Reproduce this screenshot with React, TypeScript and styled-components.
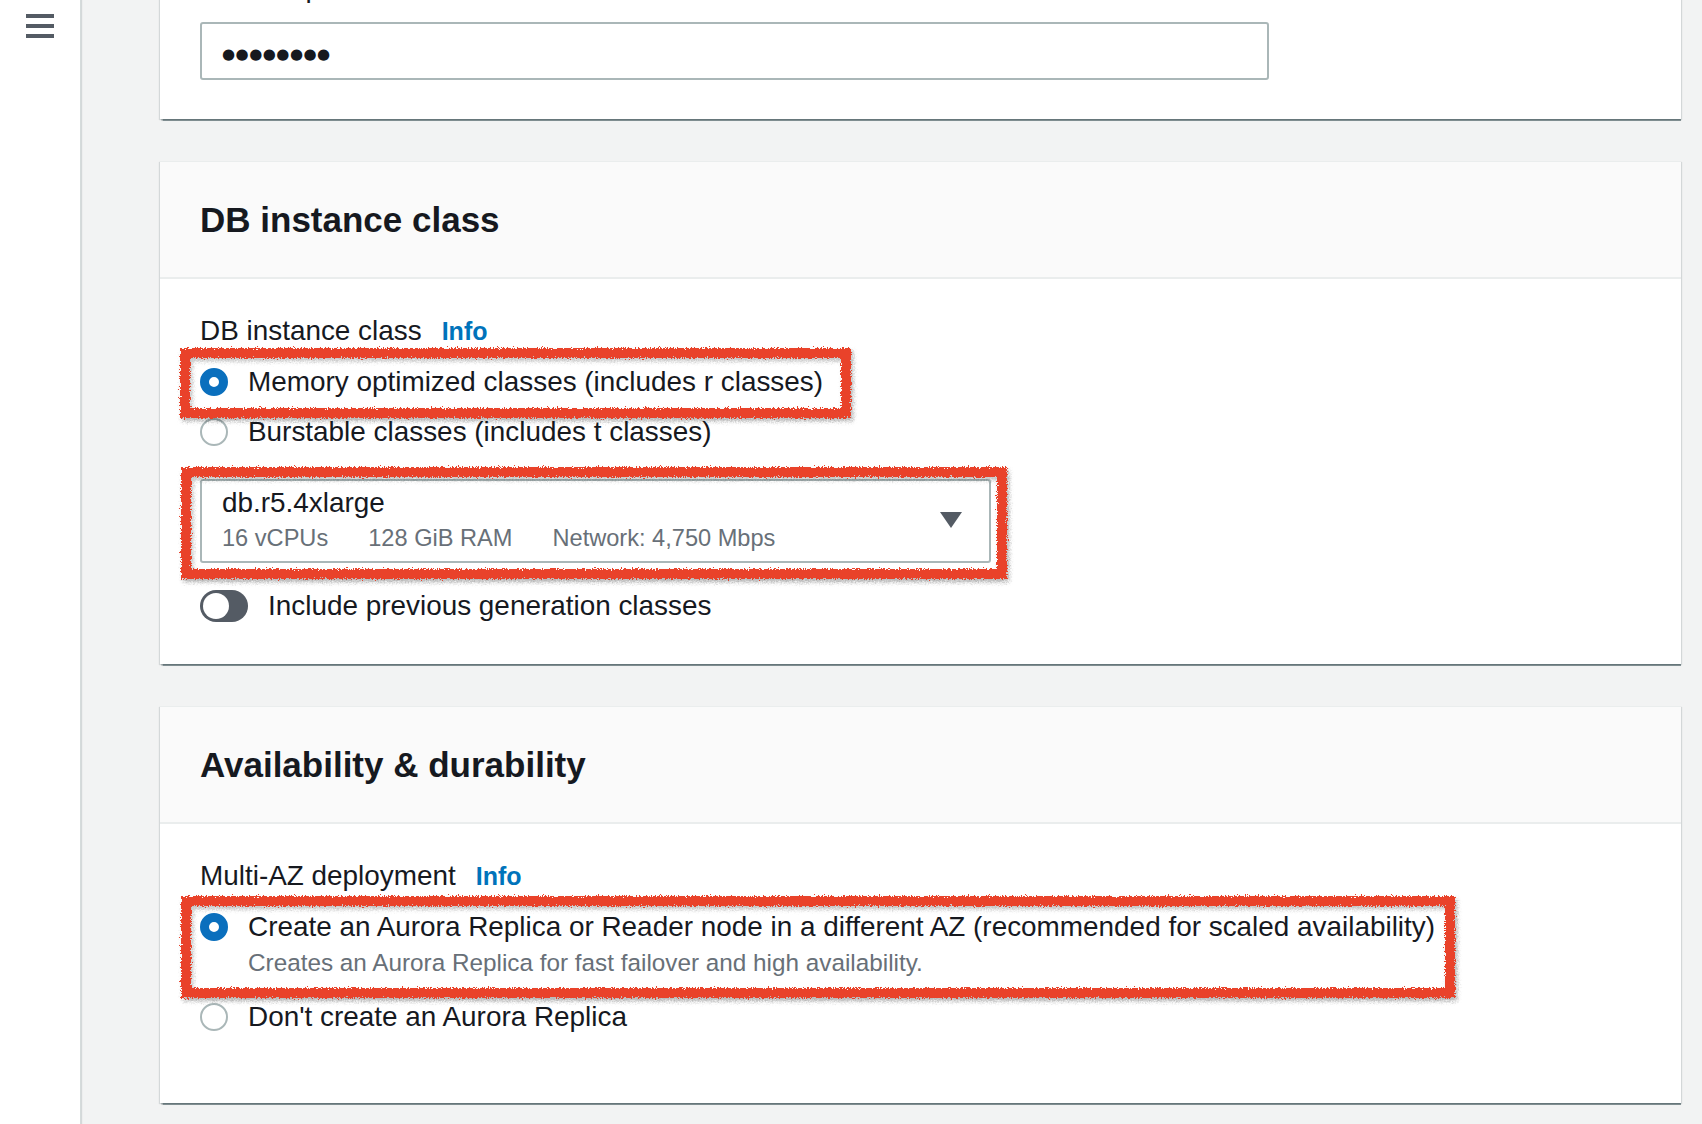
import React from "react";
import styled, { createGlobalStyle } from "styled-components";

const Global = createGlobalStyle`
  html, body { margin: 0; padding: 0; }
  body {
    background: #f2f3f3;
    font-family: "Liberation Sans", Arial, sans-serif;
    color: #16191f;
    overflow: hidden;
  }
  * { box-sizing: border-box; }
`;

const Page = styled.div`
  display: flex;
  min-height: 1124px;
  background: #f2f3f3;
`;

const Sidebar = styled.aside`
  width: 81px;
  flex: 0 0 81px;
  background: #ffffff;
  border-right: 1px solid #d5dbdb;
  box-shadow: 1px 0 1px rgba(0, 28, 36, 0.12);
  padding: 14px 0 0 26px;
`;

const Main = styled.main`
  flex: 1;
  display: flex;
  flex-direction: column;
  gap: 42px;
  padding: 0 21px 0 79px;
`;

const Card = styled.section<{ $pull?: number }>`
  background: #ffffff;
  margin-top: ${(p) => (p.$pull ? `-${p.$pull}px` : "0")};
  box-shadow: 0 2px 1px -0.5px rgba(0, 28, 36, 0.45),
    1px 1px 1px 0 rgba(0, 28, 36, 0.12), -1px 1px 1px 0 rgba(0, 28, 36, 0.12);
  border-top: 1px solid #eaeded;
`;

const CardHeader = styled.header`
  height: 117px;
  display: flex;
  align-items: center;
  padding: 0 40px;
  background: #fafafa;
  border-bottom: 2px solid #eaeded;
`;

const Heading = styled.h2`
  margin: 0;
  font-size: 35px;
  font-weight: 700;
  color: #16191f;
`;

const CardBody = styled.div<{ $bottom: number }>`
  display: flex;
  flex-direction: column;
  align-items: flex-start;
  padding: 34px 40px ${(p) => p.$bottom}px;
`;

const FieldLabel = styled.div`
  display: flex;
  align-items: baseline;
  gap: 20px;
  font-size: 27.9px;
  line-height: 36px;
  color: #16191f;
`;

const Info = styled.span`
  font-size: 25px;
  font-weight: 700;
  color: #0073bb;
`;

const PasswordBox = styled.div`
  margin-top: 16px;
  width: 1069px;
  height: 58px;
  border: 2px solid #aab7b8;
  border-radius: 3px;
  display: flex;
  align-items: center;
  padding: 6px 20px 0;
`;

const Dots = styled.span`
  font-family: "DejaVu Sans", sans-serif;
  font-size: 15px;
  letter-spacing: 0.5px;
  color: #16191f;
`;

const RadioGroup = styled.div`
  margin-top: 8px;
  display: flex;
  flex-direction: column;
  align-items: flex-start;
`;

const RadioRow = styled.div`
  display: flex;
  align-items: flex-start;
  gap: 20px;
  padding: 7px 0;
`;

const RadioCircle = styled.span<{ $checked?: boolean }>`
  flex: 0 0 28px;
  width: 28px;
  height: 28px;
  margin-top: 4px;
  border-radius: 50%;
  background: #ffffff;
  border: ${(p) => (p.$checked ? "9px solid #0a6fbd" : "2px solid #aab7b8")};
`;

const RadioText = styled.div`
  display: flex;
  flex-direction: column;
`;

const RadioLabel = styled.span`
  font-size: 27.9px;
  line-height: 36px;
  color: #16191f;
  white-space: nowrap;
`;

const RadioDesc = styled.span`
  font-size: 24.3px;
  line-height: 36px;
  padding-bottom: 4px;
  color: #687078;
  white-space: nowrap;
`;

const Annotated = styled.div<{ $inset: string; $gap?: number }>`
  position: relative;
  margin-top: ${(p) => p.$gap ?? 0}px;
  &::after {
    content: "";
    position: absolute;
    inset: ${(p) => p.$inset};
    border: 10px solid #e9432b;
    box-shadow: 2px 3px 4px rgba(0, 0, 0, 0.3),
      inset 2px 3px 4px rgba(0, 0, 0, 0.25);
    filter: url(#rough);
    pointer-events: none;
  }
`;

const Select = styled.div`
  width: 791px;
  height: 84px;
  border: 2px solid #aab7b8;
  border-radius: 3px;
  padding: 4px 27px 6px 20px;
  display: flex;
  align-items: center;
  justify-content: space-between;
`;

const SelectContent = styled.div`
  display: flex;
  flex-direction: column;
`;

const SelectValue = styled.span`
  font-size: 27.9px;
  line-height: 36px;
  color: #16191f;
`;

const SelectMeta = styled.div`
  display: flex;
  gap: 40px;
  font-size: 23.6px;
  line-height: 34px;
  color: #687078;
`;

const ToggleRow = styled.div`
  margin-top: 25px;
  display: flex;
  align-items: center;
  gap: 20px;
  height: 36px;
`;

const ToggleTrack = styled.span`
  width: 48px;
  height: 32px;
  border-radius: 16px;
  background: #545b64;
  display: flex;
  align-items: center;
  padding-left: 3px;
`;

const ToggleKnob = styled.span`
  width: 26px;
  height: 26px;
  border-radius: 50%;
  background: #ffffff;
`;

const ToggleLabel = styled.span`
  font-size: 27.9px;
  line-height: 36px;
  color: #16191f;
`;

const Defs = styled.svg`
  position: absolute;
  width: 0;
  height: 0;
`;

const Hamburger = () => (
  <svg width="28" height="24" viewBox="0 0 28 24" fill="#545b64">
    <rect x="0" y="0" width="28" height="4" />
    <rect x="0" y="10" width="28" height="4" />
    <rect x="0" y="20" width="28" height="4" />
  </svg>
);

const Caret = () => (
  <svg width="22" height="16" viewBox="0 0 22 16">
    <path d="M0 0 H22 L11 16 Z" fill="#545b64" />
  </svg>
);

export default function App() {
  return (
    <>
      <Global />
      <Defs aria-hidden="true">
        <filter id="rough" x="-10%" y="-10%" width="120%" height="120%">
          <feTurbulence type="fractalNoise" baseFrequency="0.7" numOctaves="2" seed="3" result="noise" />
          <feDisplacementMap in="SourceGraphic" in2="noise" scale="6" xChannelSelector="R" yChannelSelector="G" />
        </filter>
      </Defs>
      <Page>
        <Sidebar>
          <Hamburger />
        </Sidebar>
        <Main>
          <Card $pull={65}>
            <CardBody $bottom={39}>
              <FieldLabel>Confirm password</FieldLabel>
              <PasswordBox>
                <Dots>●●●●●●●●</Dots>
              </PasswordBox>
            </CardBody>
          </Card>

          <Card>
            <CardHeader>
              <Heading>DB instance class</Heading>
            </CardHeader>
            <CardBody $bottom={40}>
              <FieldLabel>
                DB instance class <Info>Info</Info>
              </FieldLabel>
              <RadioGroup>
                <Annotated $inset="-9px -28px -11px -20px">
                  <RadioRow>
                    <RadioCircle $checked />
                    <RadioText>
                      <RadioLabel>Memory optimized classes (includes r classes)</RadioLabel>
                    </RadioText>
                  </RadioRow>
                </Annotated>
                <RadioRow>
                  <RadioCircle />
                  <RadioText>
                    <RadioLabel>Burstable classes (includes t classes)</RadioLabel>
                  </RadioText>
                </RadioRow>
              </RadioGroup>
              <Annotated $inset="-12px -16px -16px -19px" $gap={22}>
                <Select>
                  <SelectContent>
                    <SelectValue>db.r5.4xlarge</SelectValue>
                    <SelectMeta>
                      <span>16 vCPUs</span>
                      <span>128 GiB RAM</span>
                      <span>Network: 4,750 Mbps</span>
                    </SelectMeta>
                  </SelectContent>
                  <Caret />
                </Select>
              </Annotated>
              <ToggleRow>
                <ToggleTrack>
                  <ToggleKnob />
                </ToggleTrack>
                <ToggleLabel>Include previous generation classes</ToggleLabel>
              </ToggleRow>
            </CardBody>
          </Card>

          <Card>
            <CardHeader>
              <Heading>Availability &amp; durability</Heading>
            </CardHeader>
            <CardBody $bottom={61}>
              <FieldLabel>
                Multi-AZ deployment <Info>Info</Info>
              </FieldLabel>
              <RadioGroup>
                <Annotated $inset="-6px -20px -6px -19px">
                  <RadioRow>
                    <RadioCircle $checked />
                    <RadioText>
                      <RadioLabel>
                        Create an Aurora Replica or Reader node in a different AZ (recommended for scaled availability)
                      </RadioLabel>
                      <RadioDesc>Creates an Aurora Replica for fast failover and high availability.</RadioDesc>
                    </RadioText>
                  </RadioRow>
                </Annotated>
                <RadioRow>
                  <RadioCircle />
                  <RadioText>
                    <RadioLabel>Don't create an Aurora Replica</RadioLabel>
                  </RadioText>
                </RadioRow>
              </RadioGroup>
            </CardBody>
          </Card>
        </Main>
      </Page>
    </>
  );
}
